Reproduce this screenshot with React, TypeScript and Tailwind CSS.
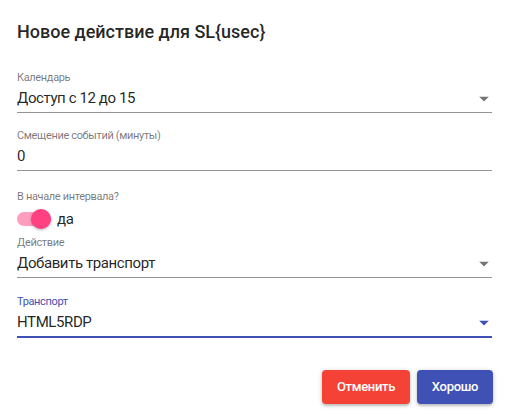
import React from "react";

function Arrow({ blue }: { blue?: boolean }) {
  return (
    <svg
      className="absolute right-[3px] top-1/2 -translate-y-1/2"
      width="10"
      height="5"
      viewBox="0 0 10 5"
    >
      <path d="M0 0L5 5L10 0Z" fill={blue ? "#3f51b5" : "rgba(0,0,0,0.54)"} />
    </svg>
  );
}

function Field({
  label,
  value,
  select,
  focused,
  className = "",
}: {
  label: string;
  value: string;
  select?: boolean;
  focused?: boolean;
  className?: string;
}) {
  return (
    <div className={className}>
      <div
        className={
          "text-[11px] leading-[14px] tracking-[-0.35px] " +
          (focused ? "text-[#3f51b5]" : "text-[rgba(0,0,0,0.54)]")
        }
      >
        {label}
      </div>
      <div
        className={
          "relative pt-[4px] pb-[4px] leading-[19px] text-[15px] tracking-[-0.4px] text-[rgba(0,0,0,0.87)] " +
          (focused
            ? "border-b-2 border-[#3f51b5]"
            : "border-b border-[rgba(0,0,0,0.42)]")
        }
      >
        {value}
        {select && <Arrow blue={focused} />}
      </div>
    </div>
  );
}

export default function App() {
  return (
    <div className="w-[509px] h-[414px] bg-white px-[17px] pt-[18px] font-['Roboto',sans-serif] overflow-hidden">
      <div className="h-[28px] text-[18px] leading-[28px] font-medium text-[rgba(0,0,0,0.87)]">
        Новое действие для SL{"{"}usec{"}"}
      </div>
      <Field className="mt-[25px]" label="Календарь" value="Доступ с 12 до 15" select />
      <Field className="mt-[16px]" label="Смещение событий (минуты)" value="0" />
      <div className="mt-[19px]">
        <div className="text-[11px] leading-[14px] tracking-[-0.35px] text-[rgba(0,0,0,0.54)]">
          В начале интервала?
        </div>
        <div className="h-[24px] mt-[3px] flex items-center">
          <div className="relative w-[34px] h-[14px] flex items-center">
            <div className="w-[34px] h-[14px] rounded-full bg-[#ff9fc0]" />
            <div className="absolute left-[14px] w-[20px] h-[20px] rounded-full bg-[#ff4081] shadow-[0_1px_3px_rgba(0,0,0,0.3)]" />
          </div>
          <span className="ml-[6px] text-[15px] leading-[19px] tracking-[-0.3px] text-[rgba(0,0,0,0.87)]">да</span>
        </div>
      </div>
      <Field className="mt-[5px]" label="Действие" value="Добавить транспорт" select />
      <Field className="mt-[17px]" label="Транспорт" value="HTML5RDP" select focused />
      <div className="mt-[32px] -mr-[1px] flex justify-end gap-[7px]">
        <button className="w-[88px] h-[34px] rounded-[4px] bg-[#f44336] text-white text-[13px] tracking-[-0.3px] font-medium shadow-[0_1px_5px_rgba(0,0,0,0.2),0_2px_2px_rgba(0,0,0,0.14)]">
          Отменить
        </button>
        <button className="w-[76px] h-[34px] rounded-[4px] bg-[#3f51b5] text-white text-[13px] tracking-[-0.3px] font-medium shadow-[0_1px_5px_rgba(0,0,0,0.2),0_2px_2px_rgba(0,0,0,0.14)]">
          Хорошо
        </button>
      </div>
    </div>
  );
}
